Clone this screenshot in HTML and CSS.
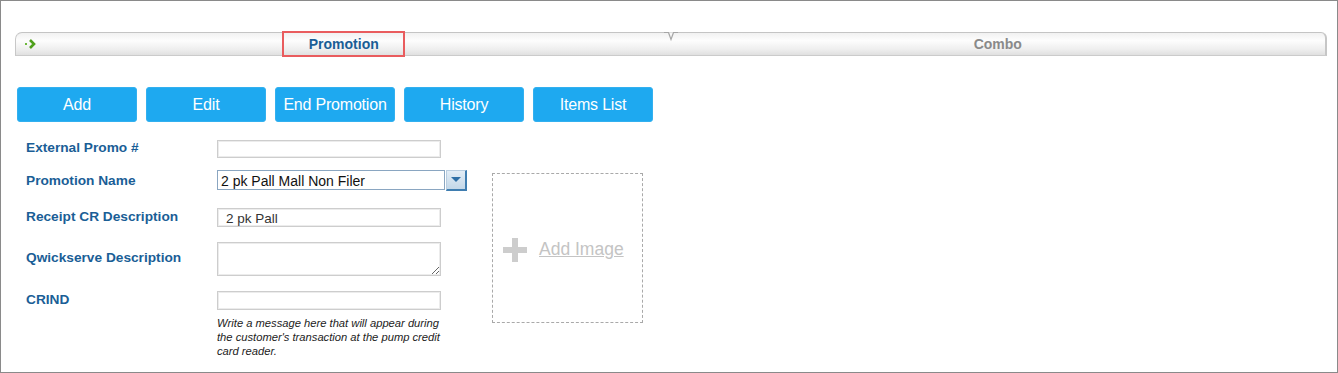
FILE: index.html
```html
<!DOCTYPE html>
<html lang="en">
<head>
    <meta charset="UTF-8">
    <meta name="viewport" content="width=device-width, initial-scale=1.0">
    <title>Promotion</title>
    <link rel="stylesheet" href="styles.css">
</head>
<body>
    <div class="frame">
        <div class="tabbar">
            <div class="tab tab-first">
                <svg class="tab-arrow" width="12" height="10" viewBox="0 0 12 10">
                    <rect x="0" y="4" width="2" height="2" fill="#6cb83a"/>
                    <polyline points="5,1 9,5 5,9" fill="none" stroke="#4fa01c" stroke-width="2.6"/>
                </svg>
                <span class="tab-label tab-active">Promotion</span>
            </div>
            <div class="tab tab-last">
                <span class="tab-label">Combo</span>
            </div>
            <svg class="tab-notch" width="14" height="10" viewBox="0 0 14 10">
                <polyline points="0,0.5 4.5,0.5 7,7.5 9.5,0.5 14,0.5" fill="#f7f7f7" stroke="#a6a6a6" stroke-width="1.2"/>
            </svg>
        </div>

        <div class="actions">
            <button class="btn">Add</button>
            <button class="btn">Edit</button>
            <button class="btn">End Promotion</button>
            <button class="btn">History</button>
            <button class="btn">Items List</button>
        </div>

        <div class="content">
            <div class="fields">
                <div class="row row-ext">
                    <label class="label">External Promo #</label>
                    <input class="input" type="text">
                </div>
                <div class="row row-name">
                    <label class="label">Promotion Name</label>
                    <div class="combo">
                        <input class="combo-input" type="text" value="2 pk Pall Mall Non Filer">
                        <span class="combo-btn">
                            <svg width="10" height="6" viewBox="0 0 10 6"><polygon points="0,0 10,0 5,5" fill="#2f6fa6"/></svg>
                        </span>
                    </div>
                </div>
                <div class="row row-receipt">
                    <label class="label">Receipt CR Description</label>
                    <input class="input" type="text" value="2 pk Pall">
                </div>
                <div class="row row-qwick">
                    <label class="label">Qwickserve Description</label>
                    <textarea class="input textarea"></textarea>
                </div>
                <div class="row row-crind">
                    <label class="label">CRIND</label>
                    <input class="input" type="text">
                </div>
                <p class="hint">Write a message here that will appear during the customer's transaction at the pump credit card reader.</p>
            </div>

            <div class="image-box">
                <svg width="24" height="24" viewBox="0 0 24 24">
                    <rect x="9" y="0" width="6" height="24" fill="#cdcdcd"/>
                    <rect x="0" y="9" width="24" height="6" fill="#cdcdcd"/>
                </svg>
                <a class="image-link" href="#">Add Image</a>
            </div>
        </div>
    </div>
</body>
</html>
```

FILE: styles.css
```css
body {
    margin: 0;
    font-family: 'Liberation Sans', Arial, sans-serif;
    background-color: #fff;
}
.frame {
    height: 373px;
    box-sizing: border-box;
    border: 1px solid #8a8a8a;
    padding: 31px 10px 0 14px;
}
.tabbar {
    position: relative;
    display: flex;
    height: 24px;
}
.tab {
    flex: 1;
    display: flex;
    align-items: center;
    justify-content: center;
    position: relative;
    box-sizing: border-box;
    border-top: 1px solid #c4c4c4;
    border-bottom: 1px solid #cbcbcb;
    background: linear-gradient(#f1f1f1, #fdfdfd 35%, #eeeeee 75%, #e0e0e0);
}
.tab-first {
    border-left: 1px solid #c8c8c8;
    border-top-left-radius: 7px;
}
.tab-last {
    border-right: 2px solid #c6c6c6;
    border-top-right-radius: 6px;
}
.tab-arrow {
    position: absolute;
    left: 9px;
    top: 6px;
}
.tab-label {
    font-size: 14px;
    font-weight: bold;
    color: #8a8a8a;
}
.tab-active {
    color: #1a5e96;
    box-sizing: border-box;
    width: 123px;
    height: 26px;
    line-height: 22px;
    text-align: center;
    border: 2px solid #e95c5e;
    margin-left: 1px;
}
.tab-notch {
    position: absolute;
    left: 649px;
    top: 0;
}
.actions {
    display: flex;
    gap: 9px;
    margin: 31px 0 0 2px;
}
.btn {
    width: 120px;
    height: 35px;
    padding: 0;
    border: 1px solid #33b0ef;
    border-radius: 3px;
    background-color: #1ea9f0;
    color: #fff;
    font-family: 'Liberation Sans', Arial, sans-serif;
    font-size: 16px;
    letter-spacing: -0.2px;
    cursor: pointer;
}
.content {
    display: flex;
    align-items: flex-start;
    margin: 18px 0 0 2px;
}
.fields {
    width: 450px;
}
.row {
    display: flex;
    align-items: center;
}
.row-ext { margin-bottom: 12px; }
.row-name { margin-bottom: 17px; }
.row-receipt { margin-bottom: 15px; }
.row-qwick { margin-bottom: 15px; }
.label {
    width: 191px;
    padding-left: 9px;
    font-size: 13.7px;
    font-weight: bold;
    color: #1a5e96;
    margin-top: -3px;
}
.row-name .label {
    margin-top: 0;
}
.input {
    box-sizing: border-box;
    width: 224px;
    height: 19px;
    margin: 0;
    padding: 1px 8px 0;
    border: 1px solid #cdcdcd;
    box-shadow: inset 0 0 0 1px #ececec;
    font-family: 'Liberation Sans', Arial, sans-serif;
    font-size: 13.5px;
    color: #333;
    outline: none;
}
.row-ext .input {
    height: 18px;
}
.textarea {
    height: 34px;
    resize: both;
    display: block;
}
.combo {
    display: flex;
    align-items: flex-start;
}
.combo-input {
    box-sizing: border-box;
    width: 228px;
    height: 20px;
    margin: 0;
    padding: 1px 3px 0;
    border: 1px solid #8aa6c1;
    font-family: 'Liberation Sans', Arial, sans-serif;
    font-size: 14px;
    color: #111;
    outline: none;
}
.combo-btn {
    box-sizing: border-box;
    width: 21px;
    height: 21px;
    margin-left: 1px;
    display: flex;
    align-items: center;
    justify-content: center;
    border: 1px solid #b8cde0;
    border-right: 2px solid #3f7db0;
    border-bottom: 2px solid #3f7db0;
    background: linear-gradient(#e3edf6, #c3d7e8);
}
.hint {
    margin: 6px 0 0 200px;
    width: 232px;
    font-size: 11.2px;
    font-style: italic;
    line-height: 14px;
    color: #222;
}
.image-box {
    box-sizing: border-box;
    width: 151px;
    height: 150px;
    margin: 33px 0 0 25px;
    border: 1px dashed #a9a9a9;
    display: flex;
    align-items: center;
    padding: 4px 0 0 10px;
    gap: 12px;
}
.image-link {
    font-size: 17.5px;
    color: #c4c4c4;
    text-decoration: underline;
    margin-top: -1px;
}
```
